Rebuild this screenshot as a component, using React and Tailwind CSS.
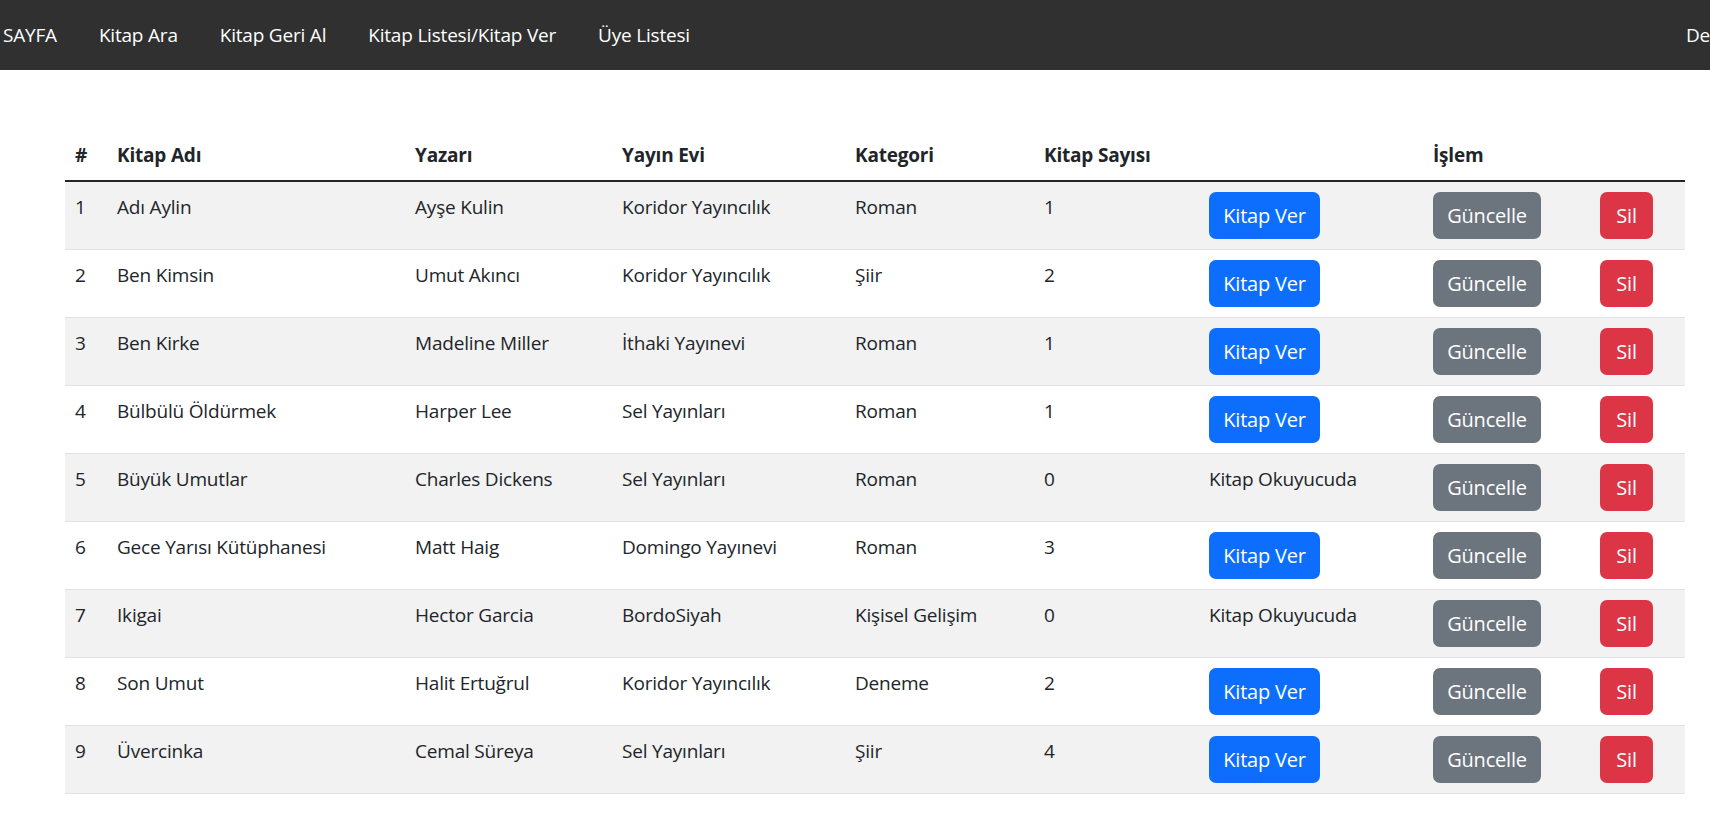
import React from 'react';

const BOOKS = [
  { id: 1, ad: 'Adı Aylin', yazar: 'Ayşe Kulin', yayinevi: 'Koridor Yayıncılık', kategori: 'Roman', sayi: 1 },
  { id: 2, ad: 'Ben Kimsin', yazar: 'Umut Akıncı', yayinevi: 'Koridor Yayıncılık', kategori: 'Şiir', sayi: 2 },
  { id: 3, ad: 'Ben Kirke', yazar: 'Madeline Miller', yayinevi: 'İthaki Yayınevi', kategori: 'Roman', sayi: 1 },
  { id: 4, ad: 'Bülbülü Öldürmek', yazar: 'Harper Lee', yayinevi: 'Sel Yayınları', kategori: 'Roman', sayi: 1 },
  { id: 5, ad: 'Büyük Umutlar', yazar: 'Charles Dickens', yayinevi: 'Sel Yayınları', kategori: 'Roman', sayi: 0 },
  { id: 6, ad: 'Gece Yarısı Kütüphanesi', yazar: 'Matt Haig', yayinevi: 'Domingo Yayınevi', kategori: 'Roman', sayi: 3 },
  { id: 7, ad: 'Ikigai', yazar: 'Hector Garcia', yayinevi: 'BordoSiyah', kategori: 'Kişisel Gelişim', sayi: 0 },
  { id: 8, ad: 'Son Umut', yazar: 'Halit Ertuğrul', yayinevi: 'Koridor Yayıncılık', kategori: 'Deneme', sayi: 2 },
  { id: 9, ad: 'Üvercinka', yazar: 'Cemal Süreya', yayinevi: 'Sel Yayınları', kategori: 'Şiir', sayi: 4 },
];

const NAV = ['Kitap Ara', 'Kitap Geri Al', 'Kitap Listesi/Kitap Ver', 'Üye Listesi'];

const btn = 'h-[47px] rounded-[7px] text-white text-center leading-[30px] px-0';

export default function App() {
  return (
    <div className="min-h-screen bg-white text-[#212529] text-[19px] leading-[30px] tracking-[-0.2px]" style={{ fontFamily: '"Open Sans", "Noto Sans", sans-serif' }}>
      {/* Navbar */}
      <nav className="h-[70px] bg-[#303030] flex items-center overflow-hidden whitespace-nowrap text-white">
        <div className="flex items-center gap-[42px] pl-[3px]">
          <a className="text-white">SAYFA</a>
          {NAV.map(n => (
            <a key={n} className="text-white">{n}</a>
          ))}
        </div>
        <div className="flex-1" />
        <div className="w-[24px] shrink-0">Destek</div>
      </nav>

      {/* Tablo */}
      <div className="pt-[60px] pl-[65px] pr-[25px]">
        <table className="w-[1620px] table-fixed border-collapse text-left">
          <colgroup>
            <col className="w-[42px]" />
            <col className="w-[298px]" />
            <col className="w-[207px]" />
            <col className="w-[233px]" />
            <col className="w-[189px]" />
            <col className="w-[165px]" />
            <col className="w-[224px]" />
            <col className="w-[167px]" />
            <col className="w-[95px]" />
          </colgroup>
          <thead>
            <tr className="border-b-2 border-[#212529]">
              <th className="p-[10px] font-bold">#</th>
              <th className="p-[10px] font-bold">Kitap Adı</th>
              <th className="p-[10px] font-bold">Yazarı</th>
              <th className="p-[10px] font-bold">Yayın Evi</th>
              <th className="p-[10px] font-bold">Kategori</th>
              <th className="p-[10px] font-bold">Kitap Sayısı</th>
              <th className="p-[10px]"></th>
              <th className="p-[10px] font-bold">İşlem</th>
              <th className="p-[10px]"></th>
            </tr>
          </thead>
          <tbody>
            {BOOKS.map((b, i) => (
              <tr key={b.id} className={`border-b border-[#dee2e6] ${i % 2 === 0 ? 'bg-[#f2f2f2]' : 'bg-white'}`}>
                <td className="p-[10px] align-top">{b.id}</td>
                <td className="p-[10px] align-top">{b.ad}</td>
                <td className="p-[10px] align-top">{b.yazar}</td>
                <td className="p-[10px] align-top">{b.yayinevi}</td>
                <td className="p-[10px] align-top">{b.kategori}</td>
                <td className="p-[10px] align-top">{b.sayi}</td>
                <td className="p-[10px] align-top">
                  {b.sayi > 0 ? (
                    <button type="button" className={`${btn} w-[111px] bg-[#0d6efd] text-[20px]`}>Kitap Ver</button>
                  ) : (
                    <span>Kitap Okuyucuda</span>
                  )}
                </td>
                <td className="p-[10px] align-top">
                  <button type="button" className={`${btn} w-[108px] bg-[#6c757d] text-[20px]`}>Güncelle</button>
                </td>
                <td className="p-[10px] align-top">
                  <button type="button" className={`${btn} w-[53px] bg-[#dc3545] text-[20px]`}>Sil</button>
                </td>
              </tr>
            ))}
          </tbody>
        </table>
      </div>
    </div>
  );
}
